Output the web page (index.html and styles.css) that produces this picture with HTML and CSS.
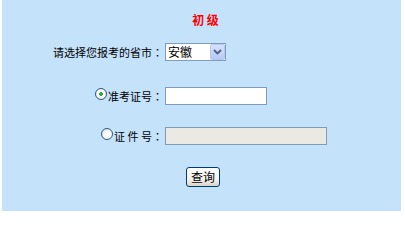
FILE: index.html
```html
<!DOCTYPE html>
<html lang="zh-CN">
<head>
<meta charset="utf-8">
<title>初级</title>
<link rel="stylesheet" href="styles.css">
</head>
<body>
<div class="page">
  <div class="title">初 级</div>
  <div class="row row-city">
    <div class="lbl">请选择您报考的省市<span class="colon">：</span></div>
    <div class="select-wrap">
      <select class="city">
        <option>安徽</option>
      </select>
      <span class="arrow"><svg width="9" height="6" viewBox="0 0 9 6"><path d="M1 1 L4.5 4.5 L8 1" fill="none" stroke="#4d6185" stroke-width="1.8"/></svg></span>
    </div>
  </div>
  <div class="row row-zkz">
    <label class="lbl"><input type="radio" name="t" class="radio" checked>准考证号<span class="colon">：</span></label>
    <input type="text" class="txt short">
  </div>
  <div class="row row-zj">
    <label class="lbl"><input type="radio" name="t" class="radio">证&nbsp;件&nbsp;号<span class="colon">：</span></label>
    <input type="text" class="txt long" disabled>
  </div>
  <div class="btn-row">
    <button class="btn">查询</button>
  </div>
</div>
</body>
</html>
```

FILE: styles.css
```css
html, body {
  margin: 0;
  padding: 0;
  background: #ffffff;
}
body {
  font-family: "Noto Sans CJK SC", "Liberation Sans", sans-serif;
  font-size: 11px;
  color: #000;
}
.page {
  margin-left: 2px;
  width: 399px;
  height: 211px;
  box-sizing: border-box;
  padding-top: 14px;
  background: #c5e2fb;
  overflow: hidden;
}
.title {
  line-height: 12px;
  font-size: 12px;
  font-weight: bold;
  color: #ff0000;
  text-align: center;
  padding-left: 8px;
}
.row {
  display: flex;
  align-items: center;
}
.lbl {
  width: 161px;
  display: flex;
  align-items: center;
  justify-content: flex-end;
  line-height: 12px;
  white-space: nowrap;
  margin-right: 2px;
}
.colon {
  font-family: "Noto Sans CJK TC", "Noto Sans CJK SC", sans-serif;
}
.row-city { margin-top: 17px; height: 18px; }
.row-zkz { margin-top: 26px; height: 18px; }
.row-zj { margin-top: 22px; height: 18px; }

.select-wrap {
  position: relative;
  width: 61px;
  height: 18px;
}
.city {
  -webkit-appearance: none;
  appearance: none;
  box-sizing: border-box;
  width: 61px;
  height: 18px;
  margin: 0;
  padding: 0 0 0 2px;
  border: 1px solid #7f9db9;
  border-radius: 0;
  background: #fff;
  font-family: "Noto Sans CJK SC", sans-serif;
  font-size: 12px;
  line-height: 16px;
  color: #000;
}
.arrow {
  position: absolute;
  right: 1px;
  top: 1px;
  width: 15px;
  height: 16px;
  box-sizing: border-box;
  border: 1px solid #b7c9f0;
  border-radius: 2px;
  background: linear-gradient(#d6e2fd, #b6c9f5);
  display: flex;
  align-items: center;
  justify-content: center;
  pointer-events: none;
}
.radio {
  -webkit-appearance: none;
  appearance: none;
  box-sizing: border-box;
  width: 12px;
  height: 12px;
  margin: 0 1px 0 0;
  border: 1px solid #2c5a87;
  border-radius: 50%;
  background: radial-gradient(circle at 60% 60%, #ffffff 30%, #d8d8d2 100%);
  position: relative;
  top: -2px;
}
.radio:checked {
  background: radial-gradient(circle at 50% 50%, #3fbf3f 0, #21a121 22%, #ffffff 30%, #ffffff 45%, #d8d8d2 100%);
}
.txt {
  box-sizing: border-box;
  height: 18px;
  margin: 0;
  padding: 0 2px;
  border: 1px solid #7f9db9;
  background: #fff;
  font-size: 12px;
}
.short { width: 102px; }
.long { width: 162px; background: #ebe9e3; }

.btn-row {
  margin-top: 22px;
  padding-left: 184px;
  height: 20px;
}
.btn {
  box-sizing: border-box;
  width: 34px;
  height: 20px;
  margin: 0;
  padding: 0;
  border: 1px solid #003c74;
  border-radius: 3px;
  background: linear-gradient(#ffffff 0%, #f5f4ef 60%, #d9d5c9 100%);
  font-family: "Noto Sans CJK SC", sans-serif;
  font-size: 12px;
  line-height: 16px;
  color: #000;
}
```
